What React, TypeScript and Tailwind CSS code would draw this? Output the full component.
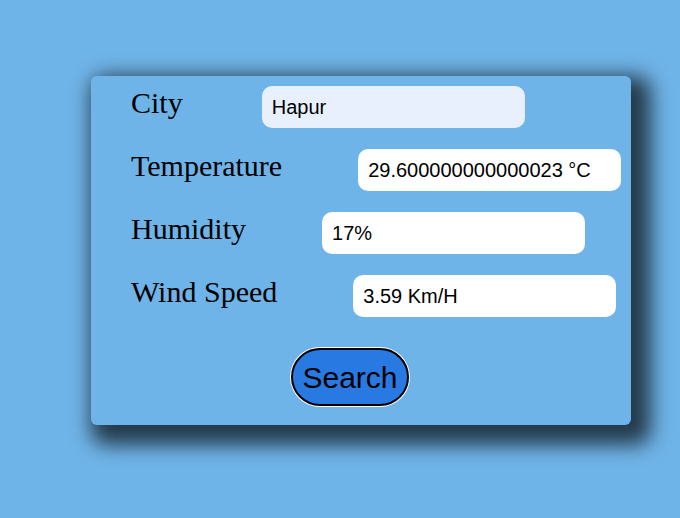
import React from 'react';

const rows = [
  { label: 'City', value: 'Hapur', gap: 'ml-[79px]', bg: 'bg-[#e8f0fe]' },
  { label: 'Temperature', value: '29.600000000000023 °C', gap: 'ml-[76px]', bg: 'bg-white' },
  { label: 'Humidity', value: '17%', gap: 'ml-[76px]', bg: 'bg-white' },
  { label: 'Wind Speed', value: '3.59 Km/H', gap: 'ml-[76px]', bg: 'bg-white' },
];

const App: React.FC = () => {
  return (
    <div className="bg-[#6fb4e8] h-[518px] w-full pt-[76px] pl-[91px]">
      <div className="w-[540px] bg-[#6fb4e8] rounded-[6px] pt-[10px] pl-[40px] pb-[19px] shadow-[10px_10px_20px_10px_rgba(0,0,0,0.68)]">
        <div className="flex flex-col gap-[21px]">
          {rows.map((r) => (
            <div key={r.label} className="flex items-start">
              <span className="text-[30px] leading-[1.15] text-black font-['Liberation_Serif',serif]">{r.label}</span>
              <input
                readOnly
                value={r.value}
                className={`${r.gap} ${r.bg} w-[263px] h-[42px] rounded-[10px] px-[10px] text-[20px] text-black outline-none font-['Liberation_Sans',Arial,sans-serif]`}
              />
            </div>
          ))}
        </div>
        <button className="block mt-[31px] ml-[160px] w-[118px] h-[58px] rounded-full border-2 border-black bg-[#2979e3] shadow-[0_0_0_1px_white] text-[30px] text-black font-['Liberation_Sans',Arial,sans-serif]">
          Search
        </button>
      </div>
    </div>
  );
};

export default App;
